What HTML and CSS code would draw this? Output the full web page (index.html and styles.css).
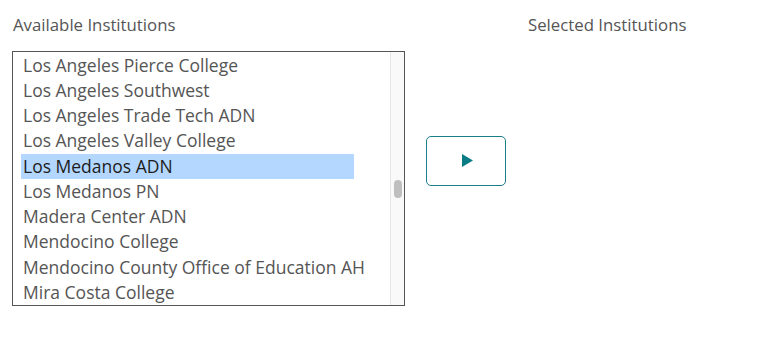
FILE: index.html
```html
<!DOCTYPE html>
<html>
<head>
<meta charset="utf-8">
<link rel="stylesheet" href="styles.css">
</head>
<body>
<div class="picker">
  <div class="column">
    <div class="label">Available Institutions</div>
    <div class="listbox">
      <div class="items">
        <div class="item">Los Angeles Pierce College</div>
        <div class="item">Los Angeles Southwest</div>
        <div class="item">Los Angeles Trade Tech ADN</div>
        <div class="item">Los Angeles Valley College</div>
        <div class="item selected">Los Medanos ADN</div>
        <div class="item">Los Medanos PN</div>
        <div class="item">Madera Center ADN</div>
        <div class="item">Mendocino College</div>
        <div class="item">Mendocino County Office of Education AH</div>
        <div class="item">Mira Costa College</div>
      </div>
      <div class="scrollbar"><div class="thumb"></div></div>
    </div>
  </div>
  <div class="actions">
    <button class="move" type="button" aria-label="Add">
      <svg width="11" height="13" viewBox="0 0 11 13"><path d="M0 0 L11 6.5 L0 13 Z" fill="#0b7c86"/></svg>
    </button>
  </div>
  <div class="column right">
    <div class="label">Selected Institutions</div>
  </div>
</div>
</body>
</html>
```

FILE: styles.css
```css
html, body {
  margin: 0;
  padding: 0;
  background: #fff;
}
body {
  font-family: "Open Sans", "Noto Sans", sans-serif;
  color: #555;
}
.picker {
  display: flex;
  align-items: flex-start;
  padding: 14px 0 0 12px;
}
.column {
  display: flex;
  flex-direction: column;
  width: 393px;
}
.column.right {
  width: 220px;
}
.label {
  font-size: 16.8px;
  line-height: 22px;
  padding-left: 1px;
  height: 22px;
  margin-bottom: 15px;
}
.right .label {
  padding-left: 0;
}
.listbox {
  box-sizing: border-box;
  height: 255px;
  border: 1px solid #555;
  display: flex;
  overflow: hidden;
}
.items {
  flex: 1;
  padding: 0.5px 0 0 8px;
}
.item {
  width: 331px;
  height: 25.25px;
  line-height: 24px;
  font-size: 17.5px;
  padding-left: 2px;
  white-space: nowrap;
}
.item.selected {
  background: #b3d7ff;
  color: #1c1c1c;
}
.scrollbar {
  width: 13px;
  border-left: 1px solid #e6e6e6;
  background: #f9f9f9;
  display: flex;
  justify-content: center;
}
.thumb {
  margin-top: 128px;
  width: 8px;
  height: 18px;
  border-radius: 4px;
  background: #bfbfbf;
}
.actions {
  padding: 122px 22px 0 21px;
}
.move {
  box-sizing: border-box;
  width: 80px;
  height: 50px;
  border: 1px solid #1a7f88;
  border-radius: 5px;
  background: #fff;
  display: flex;
  align-items: center;
  justify-content: center;
  padding: 0 0 1px 3px;
  margin: 0;
}
```
